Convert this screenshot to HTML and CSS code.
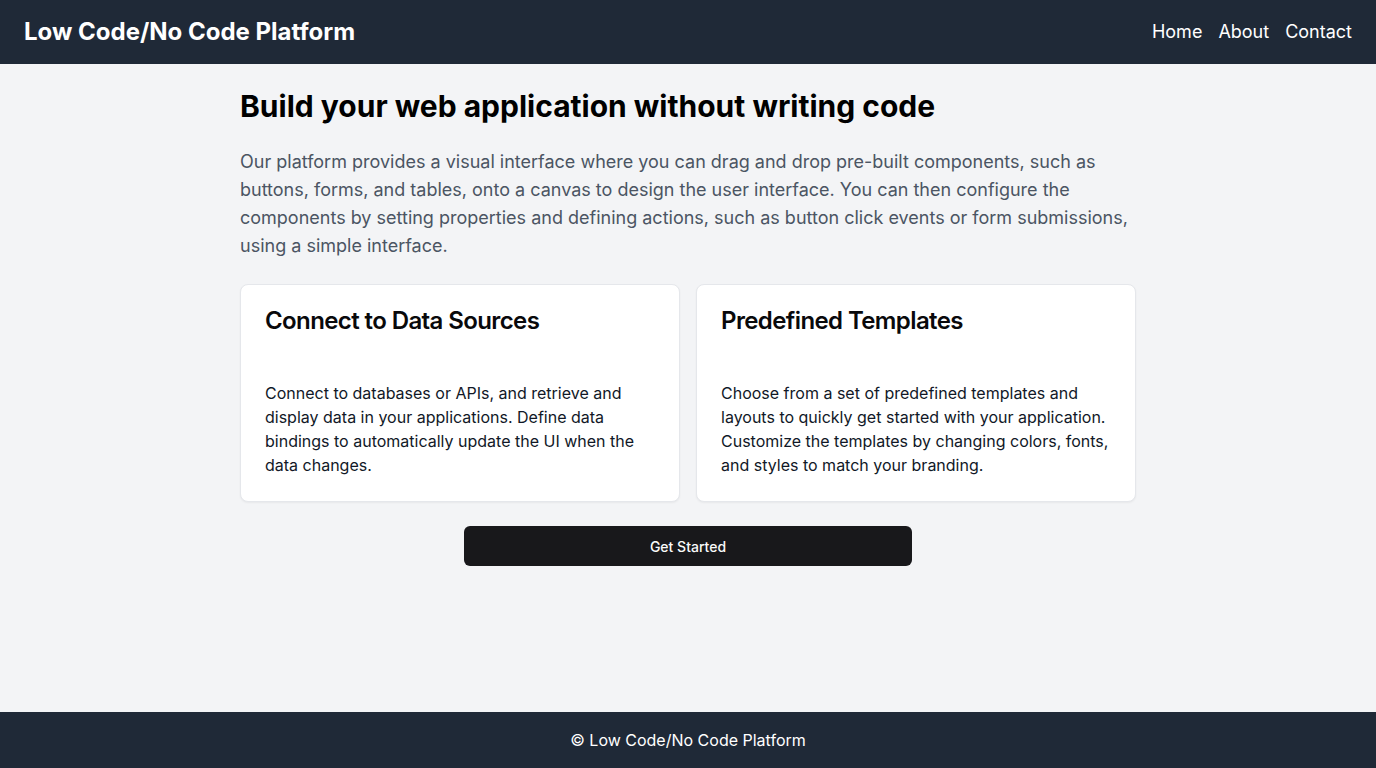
FILE: index.html
```html
<!DOCTYPE html>
<html lang="en">
<head>
<meta charset="utf-8">
<title>Low Code/No Code Platform</title>
<link rel="stylesheet" href="styles.css">
</head>
<body>
<div class="page">
  <header class="topbar">
    <div class="brand">Low Code/No Code Platform</div>
    <nav class="nav">
      <a href="#">Home</a>
      <a href="#">About</a>
      <a href="#">Contact</a>
    </nav>
  </header>
  <main class="main">
    <div class="container">
      <h1 class="headline">Build your web application without writing code</h1>
      <p class="lead">Our platform provides a visual interface where you can drag and drop pre-built components, such as buttons, forms, and tables, onto a canvas to design the user interface. You can then configure the components by setting properties and defining actions, such as button click events or form submissions, using a simple interface.</p>
      <div class="cards">
        <div class="card">
          <div class="card-header"><h2 class="card-title">Connect to Data Sources</h2></div>
          <div class="card-content"><p>Connect to databases or APIs, and retrieve and display data in your applications. Define data bindings to automatically update the UI when the data changes.</p></div>
        </div>
        <div class="card">
          <div class="card-header"><h2 class="card-title">Predefined Templates</h2></div>
          <div class="card-content"><p>Choose from a set of predefined templates and layouts to quickly get started with your application. Customize the templates by changing colors, fonts, and styles to match your branding.</p></div>
        </div>
      </div>
      <div class="cta-row"><button class="cta">Get Started</button></div>
    </div>
  </main>
  <footer class="footer">© Low Code/No Code Platform</footer>
</div>
</body>
</html>
```
FILE: styles.css
```css
* { box-sizing: border-box; margin: 0; padding: 0; }
html, body { height: 100%; }
body {
  font-family: Inter, "Noto Sans", sans-serif;
  background: #f3f4f6;
  color: #09090b;
}
.page { min-height: 100vh; display: flex; flex-direction: column; }
.topbar {
  height: 64px;
  background: #1f2937;
  color: #fff;
  display: flex;
  align-items: center;
  justify-content: space-between;
  padding: 0 24px;
}
.brand { font-size: 24px; line-height: 32px; font-weight: 700; }
.nav { display: flex; gap: 16px; }
.nav a { color: #fff; text-decoration: none; font-size: 18px; line-height: 28px; }
.main { flex: 1; padding: 24px 0; }
.container { max-width: 896px; margin: 0 auto; }
.headline { font-size: 30px; line-height: 36px; font-weight: 700; color: #000; margin-bottom: 24px; }
.lead { font-size: 18px; line-height: 28px; color: #4b5563; margin-bottom: 24px; }
.cards { display: grid; grid-template-columns: 1fr 1fr; gap: 16px; margin-bottom: 24px; }
.card {
  background: #fff;
  border: 1px solid #e5e7eb;
  border-radius: 8px;
  box-shadow: 0 1px 2px rgba(0,0,0,0.05);
}
.card-header { padding: 24px; }
.card-title { font-size: 24px; line-height: 24px; font-weight: 600; letter-spacing: -0.6px; color: #09090b; }
.card-content { padding: 24px; font-size: 16px; line-height: 24px; color: #111827; }
.cta-row { display: flex; justify-content: center; }
.cta {
  width: 448px;
  height: 40px;
  background: #18181b;
  color: #fafafa;
  border: none;
  border-radius: 6px;
  font-family: Inter, "Noto Sans", sans-serif;
  font-size: 14px;
  font-weight: 500;
}
.footer {
  background: #1f2937;
  color: #fff;
  text-align: center;
  padding: 16px;
  font-size: 16px;
  line-height: 24px;
}
```
